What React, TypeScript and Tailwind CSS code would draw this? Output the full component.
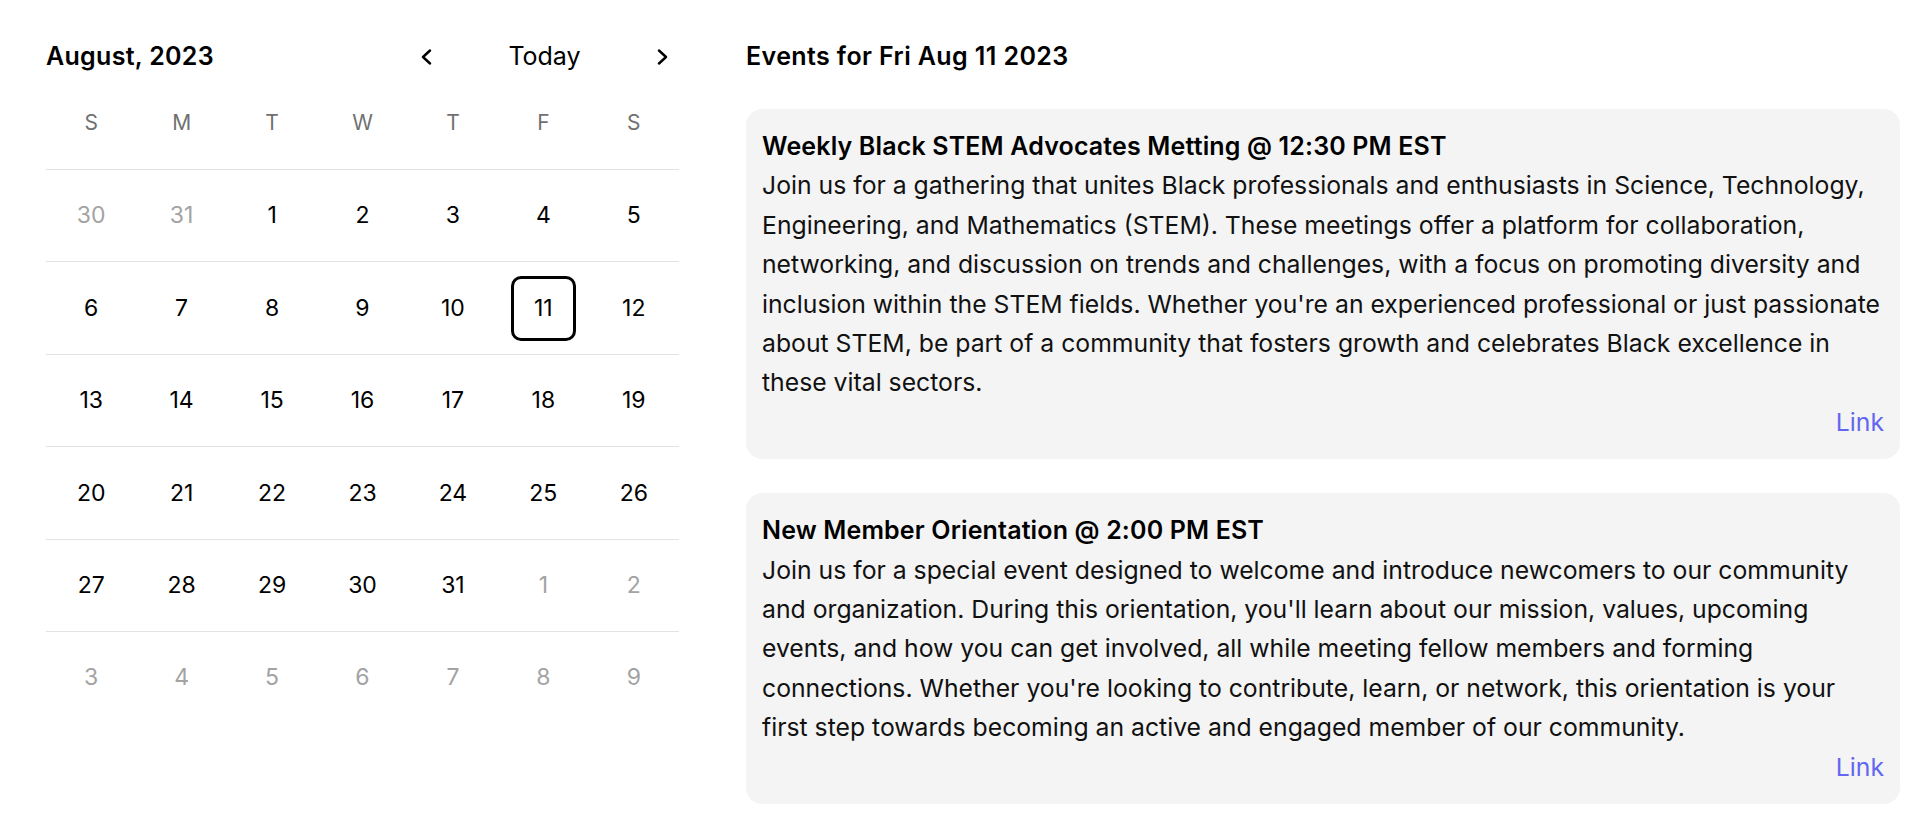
const weeks: { d: number; muted?: boolean }[][] = [
  [{ d: 30, muted: true }, { d: 31, muted: true }, { d: 1 }, { d: 2 }, { d: 3 }, { d: 4 }, { d: 5 }],
  [{ d: 6 }, { d: 7 }, { d: 8 }, { d: 9 }, { d: 10 }, { d: 11 }, { d: 12 }],
  [{ d: 13 }, { d: 14 }, { d: 15 }, { d: 16 }, { d: 17 }, { d: 18 }, { d: 19 }],
  [{ d: 20 }, { d: 21 }, { d: 22 }, { d: 23 }, { d: 24 }, { d: 25 }, { d: 26 }],
  [{ d: 27 }, { d: 28 }, { d: 29 }, { d: 30 }, { d: 31 }, { d: 1, muted: true }, { d: 2, muted: true }],
  [3, 4, 5, 6, 7, 8, 9].map((d) => ({ d, muted: true })),
];

const days = ["S", "M", "T", "W", "T", "F", "S"];

const events = [
  {
    title: "Weekly Black STEM Advocates Metting @ 12:30 PM EST",
    body:
      "Join us for a gathering that unites Black professionals and enthusiasts in Science, Technology, Engineering, and Mathematics (STEM). These meetings offer a platform for collaboration, networking, and discussion on trends and challenges, with a focus on promoting diversity and inclusion within the STEM fields. Whether you're an experienced professional or just passionate about STEM, be part of a community that fosters growth and celebrates Black excellence in these vital sectors.",
  },
  {
    title: "New Member Orientation @ 2:00 PM EST",
    body:
      "Join us for a special event designed to welcome and introduce newcomers to our community and organization. During this orientation, you'll learn about our mission, values, upcoming events, and how you can get involved, all while meeting fellow members and forming connections. Whether you're looking to contribute, learn, or network, this orientation is your first step towards becoming an active and engaged member of our community.",
  },
];

const Chevron = ({ dir }: { dir: "left" | "right" }) => (
  <svg width="12" height="16" viewBox="0 0 12 16" fill="none" stroke="currentColor" strokeWidth="2.4" strokeLinecap="round" strokeLinejoin="round">
    {dir === "left" ? <path d="M10 1.5 3 8l7 6.5" /> : <path d="M2 1.5 9 8l-7 6.5" />}
  </svg>
);

const Calendar = () => {
  return (
    <div className="w-[633px] shrink-0">
      <div className="h-[41px] flex items-center justify-between">
        <h2 className="text-[25px] font-semibold tracking-[0.3px] text-black">August, 2023</h2>
        <div className="flex items-center">
          <button className="w-8 h-8 flex items-center justify-center text-black">
            <Chevron dir="left" />
          </button>
          <button className="w-[205px] text-center text-[25px] text-black">Today</button>
          <button className="w-8 h-8 flex items-center justify-center text-black">
            <Chevron dir="right" />
          </button>
        </div>
      </div>
      <div className="grid grid-cols-7 h-[92px]">
        {days.map((d, i) => (
          <div key={i} className="flex items-center justify-center text-[21px] text-[#707070]">
            {d}
          </div>
        ))}
      </div>
      {weeks.map((week, wi) => (
        <div key={wi} className="grid grid-cols-7 h-[92.4px] border-t border-[#e3e3e3]">
          {week.map((c, ci) => {
            const selected = !c.muted && c.d === 11;
            return (
              <div
                key={ci}
                className={`flex items-center justify-center text-[23px] ${c.muted ? "text-[#a3a3a3]" : "text-black"}`}
              >
                {selected ? (
                  <span className="w-[65px] h-[65px] flex items-center justify-center border-[3px] border-black rounded-[10px]">
                    {c.d}
                  </span>
                ) : (
                  c.d
                )}
              </div>
            );
          })}
        </div>
      ))}
    </div>
  );
};

const Events = () => {
  return (
    <div className="w-[1154px] shrink-0">
      <div className="h-[41px] flex items-center">
        <h2 className="text-[25px] font-semibold tracking-[0.4px] text-black">Events for Fri Aug 11 2023</h2>
      </div>
      <div className="mt-8 flex flex-col gap-[34px]">
        {events.map((e) => (
          <div key={e.title} className="bg-[#f4f4f4] rounded-2xl px-4 pt-[18px] pb-[17px] leading-[39.4px] text-[#111]">
            <p className="text-[25px] font-semibold tracking-[0.15px] text-black">{e.title}</p>
            <p className="text-[24.75px]">{e.body}</p>
            <div className="text-right text-[24.75px]">
              <a href="#" className="text-[#6366f1]">
                Link
              </a>
            </div>
          </div>
        ))}
      </div>
    </div>
  );
};

export default function App() {
  return (
    <div className="min-h-[820px] w-[1920px] bg-white pt-9 pl-[46px] flex gap-[67px]" style={{ fontFamily: "Inter, 'Noto Sans', sans-serif" }}>
      <Calendar />
      <Events />
    </div>
  );
}
